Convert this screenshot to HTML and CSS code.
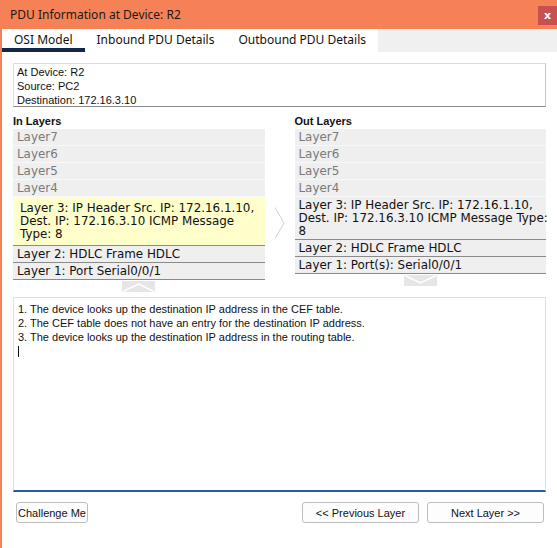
FILE: index.html
```html
<!DOCTYPE html>
<html>
<head>
<meta charset="utf-8">
<link rel="stylesheet" href="styles.css">
</head>
<body>
<div class="window">
  <div class="titlebar">
    <span class="title">PDU Information at Device: R2</span>
    <span class="close">x</span>
  </div>
  <div class="tabbar">
    <div class="tabs">
      <span class="tab active">OSI Model</span>
      <span class="tab">Inbound PDU Details</span>
      <span class="tab">Outbound PDU Details</span>
    </div>
    <div class="tabfill"></div>
  </div>
  <div class="content">
    <div class="info">
      <div>At Device: R2</div>
      <div>Source: PC2</div>
      <div>Destination: 172.16.3.10</div>
    </div>
    <div class="layers">
      <div class="col">
        <div class="heading">In Layers</div>
        <div class="row off">Layer7</div>
        <div class="row off">Layer6</div>
        <div class="row off">Layer5</div>
        <div class="row off">Layer4</div>
        <div class="row on sel">Layer 3: IP Header Src. IP: 172.16.1.10,<br>Dest. IP: 172.16.3.10 ICMP Message<br>Type: 8</div>
        <div class="row on">Layer 2: HDLC Frame HDLC</div>
        <div class="row on">Layer 1: Port Serial0/0/1</div>
        <div class="ind">
          <svg width="33" height="11" viewBox="0 0 33 11"><rect x="0" y="0" width="33" height="11" fill="#e6e6e6"/><polyline points="1,10.5 16.5,3 32,10.5" fill="none" stroke="#fff" stroke-width="1.5"/></svg>
        </div>
      </div>
      <div class="mid">
        <svg width="11" height="32" viewBox="0 0 11 32"><polyline points="1,0.5 10,16 1,31.5" fill="#fff" stroke="#cfcfcf" stroke-width="1"/></svg>
      </div>
      <div class="col">
        <div class="heading">Out Layers</div>
        <div class="row off">Layer7</div>
        <div class="row off">Layer6</div>
        <div class="row off">Layer5</div>
        <div class="row off">Layer4</div>
        <div class="row on">Layer 3: IP Header Src. IP: 172.16.1.10,<br>Dest. IP: 172.16.3.10 ICMP Message Type:<br>8</div>
        <div class="row on">Layer 2: HDLC Frame HDLC</div>
        <div class="row on">Layer 1: Port(s): Serial0/0/1</div>
        <div class="ind">
          <svg width="33" height="11" viewBox="0 0 33 11"><rect x="0" y="0" width="33" height="11" fill="#e6e6e6"/><polyline points="1,0.5 16.5,8 32,0.5" fill="none" stroke="#fff" stroke-width="1.5"/></svg>
        </div>
      </div>
    </div>
    <div class="notes">
      <div>1. The device looks up the destination IP address in the CEF table.</div>
      <div>2. The CEF table does not have an entry for the destination IP address.</div>
      <div>3. The device looks up the destination IP address in the routing table.</div>
      <div class="caret"></div>
    </div>
    <div class="buttons">
      <button class="btn small">Challenge Me</button>
      <span class="spacer"></span>
      <button class="btn wide">&lt;&lt; Previous Layer</button>
      <button class="btn wide">Next Layer &gt;&gt;</button>
    </div>
  </div>
</div>
</body>
</html>
```

FILE: styles.css
```css
html, body {
  margin: 0;
  padding: 0;
  background: #fff;
}
.window {
  width: 557px;
  height: 548px;
  box-sizing: border-box;
  border-left: 2px solid #f78156;
  display: flex;
  flex-direction: column;
  font-family: "Liberation Sans", Arial, sans-serif;
  overflow: hidden;
}
.titlebar {
  height: 29px;
  background: #f78156;
  display: flex;
  align-items: center;
  justify-content: space-between;
  margin-left: -2px;
  padding-left: 10px;
}
.title {
  font-family: "Noto Sans", sans-serif;
  font-size: 12px;
  color: #1a1a1a;
}
.close {
  width: 19px;
  height: 19px;
  background: #c75050;
  color: #fff;
  font-family: "DejaVu Sans", sans-serif;
  font-size: 11px;
  font-weight: bold;
  display: flex;
  align-items: center;
  justify-content: center;
  margin-top: 2px;
}
.tabbar {
  height: 23px;
  display: flex;
}
.tabs {
  display: flex;
  background: #fff;
}
.tab {
  padding: 0 12px;
  font-family: "Noto Sans", sans-serif;
  font-size: 12px;
  color: #111;
  line-height: 22px;
  height: 23px;
  box-sizing: border-box;
}
.tab.active {
  border-bottom: 4px solid #102848;
}
.tabfill {
  flex: 1;
  background: #f0f0f0;
}
.content {
  flex: 1;
  display: flex;
  flex-direction: column;
  padding: 11px 11px 0 11px;
}
.info {
  height: 44px;
  box-sizing: border-box;
  border: 1px solid #dcdcdc;
  border-bottom: 1px solid #8a8a8a;
  border-right-color: #c8c8c8;
  padding: 1px 3px 0;
  font-size: 11px;
  line-height: 14px;
  color: #111;
}
.layers {
  display: grid;
  grid-template-columns: 1fr 30px 1fr;
  margin-top: 7px;
}
.col {
  min-width: 0;
}
.heading {
  font-weight: bold;
  font-size: 11px;
  line-height: 14px;
  height: 15px;
  color: #111;
}
.row {
  font-family: "DejaVu Sans", Verdana, sans-serif;
  font-size: 11.9px;
  line-height: 13px;
  background: #efefef;
  box-sizing: border-box;
  padding: 2px 0 1px 4px;
  min-height: 17px;
  white-space: nowrap;
}
.row.off {
  color: #7a7a7a;
  border-bottom: 1px solid #f8f8f8;
}
.row.on {
  color: #111;
  border-bottom: 1px solid #8a8a8a;
}
.row.sel {
  background: #ffffcc;
  padding: 5px 7px 4px;
}
.ind {
  display: flex;
  justify-content: center;
  height: 16px;
  padding-top: 1px;
}
.mid {
  display: flex;
  justify-content: center;
  padding-top: 93px;
}
.notes {
  height: 195px;
  box-sizing: border-box;
  border: 1px solid #e0e0e0;
  border-bottom: 2px solid #1e5fa8;
  border-right-color: #d6e2ee;
  padding: 4px 4px;
  font-size: 11px;
  line-height: 14px;
  color: #111;
}
.caret {
  width: 1px;
  height: 11px;
  background: #111;
  margin-top: 2px;
}
.buttons {
  display: flex;
  margin-top: 10px;
  padding-left: 3px;
  padding-right: 2px;
  gap: 8px;
}
.spacer {
  flex: 1;
}
.btn {
  height: 21px;
  box-sizing: border-box;
  border: 1px solid #bdbdbd;
  border-radius: 3px;
  background: #fdfdfd;
  font-family: "Liberation Sans", Arial, sans-serif;
  font-size: 11px;
  color: #111;
  padding: 0;
}
.btn.small {
  width: 72px;
}
.btn.wide {
  width: 117px;
}
```
